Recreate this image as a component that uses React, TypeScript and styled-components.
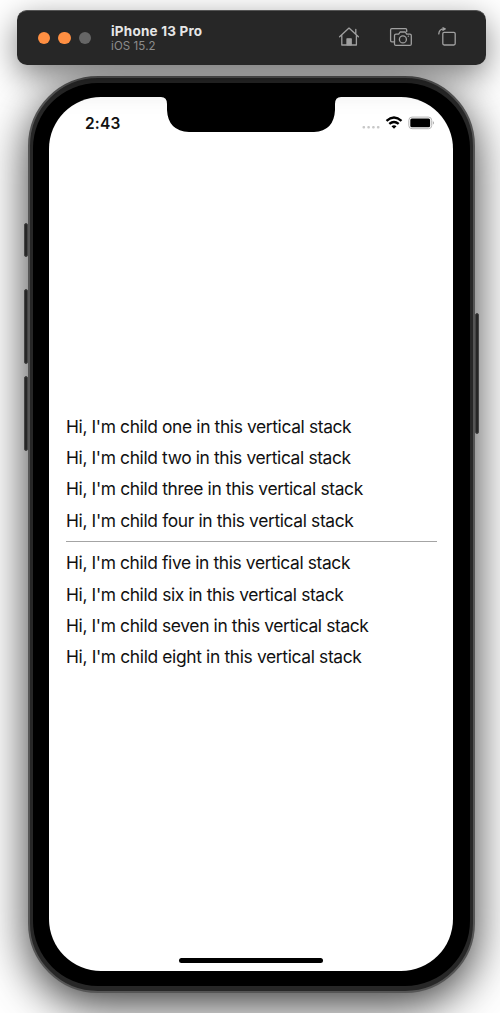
import React from 'react';
import styled, { createGlobalStyle } from 'styled-components';

const Global = createGlobalStyle`
  * { box-sizing: border-box; }
  body { margin: 0; background: #fff; overflow: hidden; font-family: Inter, "Liberation Sans", sans-serif; }
`;

const Desktop = styled.main`
  width: 500px;
  height: 1013px;
  padding-top: 10px;
  display: flex;
  flex-direction: column;
  align-items: center;
  gap: 11px;
  overflow: hidden;
  background: #fff;
`;

const Toolbar = styled.header`
  position: relative;
  z-index: 1;
  width: 469px;
  height: 55px;
  margin-left: 2px;
  flex: none;
  display: flex;
  align-items: center;
  padding: 0 28px 0 21px;
  border-radius: 10px;
  background: #272727;
  border-top: 1px solid #555;
  box-shadow: 0 10px 32px rgba(0, 0, 0, 0.5);
`;

const Lights = styled.div`
  display: flex;
  gap: 8px;
`;

const Light = styled.i<{ $color: string }>`
  width: 12.5px;
  height: 12.5px;
  border-radius: 50%;
  background: ${(p) => p.$color};
`;

const Titles = styled.div`
  margin-left: 20px;
  flex: 1;
`;

const Device = styled.div`
  color: #e6e6e6;
  font-size: 13.5px;
  line-height: 16px;
  font-weight: 700;
  letter-spacing: 0.2px;
`;

const System = styled.div`
  color: #8c8c8c;
  font-size: 11.5px;
  line-height: 15px;
  letter-spacing: 0.1px;
`;

const Actions = styled.nav`
  display: flex;
  color: #a0a0a0;
  svg { display: block; }
`;

const Phone = styled.section`
  position: relative;
  width: 447px;
  height: 917px;
  margin-left: 3px;
  flex: none;
  padding: 5px;
  border-radius: 70px;
  background: #272727;
  border: 2px solid #555;
  box-shadow: 0 12px 46px rgba(0, 0, 0, 0.78);
`;

const Bezel = styled.div`
  height: 100%;
  margin: 0 -2px;
  padding: 14px 17px 15px 16px;
  border-radius: 65px;
  background: #000;
`;

const SideButton = styled.i<{ $side: 'left' | 'right'; $top: number; $height: number }>`
  position: absolute;
  ${(p) => p.$side}: -6px;
  top: ${(p) => p.$top}px;
  width: 4px;
  height: ${(p) => p.$height}px;
  background: #272727;
  border: 1px solid #444;
  border-radius: 2px;
`;

const Screen = styled.div`
  height: 100%;
  display: flex;
  flex-direction: column;
  border-radius: 52px;
  background: #fff;
  overflow: hidden;
`;

const StatusBar = styled.div`
  display: flex;
  height: 44px;
  padding: 0 18px 0 36px;
  align-items: flex-start;
  flex: none;
`;

const Time = styled.time`
  width: 76px;
  padding-top: 17px;
  font-size: 15.5px;
  line-height: 20px;
  font-weight: 600;
  letter-spacing: 0.2px;
  color: #111;
`;

const StatusIcons = styled.div`
  margin: 16px 0 0 auto;
`;

const Stack = styled.div`
  flex: 1;
  padding: 0 16px 16px 17px;
  display: flex;
  flex-direction: column;
  justify-content: center;
  gap: 10.35px;
`;

const Child = styled.div<{ $spacing: number }>`
  font-size: 17.4px;
  line-height: 21px;
  letter-spacing: ${(p) => p.$spacing}px;
  white-space: nowrap;
  color: #111;
`;

const Divider = styled.hr`
  width: 100%;
  height: 1px;
  margin: 0;
  border: 0;
  background: #a4a4a4;
`;

const HomeIndicator = styled.div`
  width: 144px;
  height: 5px;
  margin: 0 auto 8px;
  flex: none;
  border-radius: 3px;
  background: #000;
`;

const words: [string, number][] = [
  ['one', -0.37], ['two', -0.37], ['three', -0.355], ['four', -0.365],
  ['five', -0.375], ['six', -0.365], ['seven', -0.37], ['eight', -0.35],
];

const row = ([word, spacing]: [string, number]) => (
  <Child key={word} $spacing={spacing}>Hi, I'm child {word} in this vertical stack</Child>
);

export default function App() {
  return (
    <>
      <Global />
      <Desktop>
        <Toolbar>
          <Lights>
            <Light $color="#ff8f42" />
            <Light $color="#ff8f42" />
            <Light $color="#666" />
          </Lights>
          <Titles>
            <Device>iPhone 13 Pro</Device>
            <System>iOS 15.2</System>
          </Titles>
          <Actions>
            <svg width="120" height="22" viewBox="338 26.5 120 22" fill="none" stroke="currentColor" strokeWidth="1.3" strokeLinejoin="round" strokeLinecap="round">
              <path d="M339.6 36.3 349 27.6l9.4 8.7M341.8 34.8v9.7h14.6v-9.7M355.8 33v-4" />
              <path d="M347 44.3v-6h4.2v6z" fill="currentColor" />
              <path d="M394.5 41.3h-2.7a1.2 1.2 0 0 1-1.2-1.2V29.4a1.2 1.2 0 0 1 1.2-1.2h13.7a1.2 1.2 0 0 1 1.2 1.2v1.5" />
              <path d="M396 33.6h2.7l1.4-2.1h5.2l1.4 2.1h3.1a1.5 1.5 0 0 1 1.5 1.5v8.3a1.5 1.5 0 0 1-1.5 1.5H396a1.5 1.5 0 0 1-1.5-1.5v-8.3a1.5 1.5 0 0 1 1.5-1.5z" />
              <circle cx="402.9" cy="38.9" r="3.5" />
              <path d="M408.3 35.7h.1" />
              <rect x="442.8" y="31.8" width="12.4" height="12.7" rx="1.4" />
              <path d="M438.8 33.4c.2-3.4 2-5 5.4-5M443 27.2l2.2 1.2-2.2 1.4" />
            </svg>
          </Actions>
        </Toolbar>
        <Phone>
          <SideButton $side="left" $top={145} $height={34} />
          <SideButton $side="left" $top={211} $height={75} />
          <SideButton $side="left" $top={298} $height={75} />
          <SideButton $side="right" $top={235} $height={121} />
          <Bezel>
            <Screen>
              <StatusBar>
                <Time>2:43</Time>
                <svg width="180" height="36" viewBox="161 97 180 36">
                  <path d="M161 96v1q6 0 6 7v6q1 21 22 22h125q20-1 21-22v-6q0-7 6-7v-1z" fill="#000" />
                </svg>
                <StatusIcons>
                  <svg width="74" height="20" viewBox="361 113 74 20">
                    <g fill="#c8c8c8">
                      <rect x="362.5" y="126" width="2.6" height="2.6" rx="1" />
                      <rect x="367.3" y="126" width="2.6" height="2.6" rx="1" />
                      <rect x="372.1" y="126" width="2.6" height="2.6" rx="1" />
                      <rect x="376.9" y="126" width="2.6" height="2.6" rx="1" />
                    </g>
                    <g fill="none" stroke="#000" strokeWidth="2.4">
                      <path d="M386.5 120.8q7.5-6.6 15 0" />
                      <path d="M389.3 123.9q4.7-4 9.4 0" />
                    </g>
                    <path d="M391.5 126.2q2.5-1.9 5 0L394 128.7z" fill="#000" />
                    <rect x="408.8" y="117.1" width="22.9" height="11.6" rx="3.2" fill="none" stroke="#b5b5b5" />
                    <rect x="410.3" y="118.6" width="19.8" height="8.6" rx="1.5" fill="#000" />
                    <path d="M432.9 121q1.9 1.9 0 3.8z" fill="#999" />
                  </svg>
                </StatusIcons>
              </StatusBar>
              <Stack>
                {words.slice(0, 4).map(row)}
                <Divider />
                {words.slice(4).map(row)}
              </Stack>
              <HomeIndicator />
            </Screen>
          </Bezel>
        </Phone>
      </Desktop>
    </>
  );
}
